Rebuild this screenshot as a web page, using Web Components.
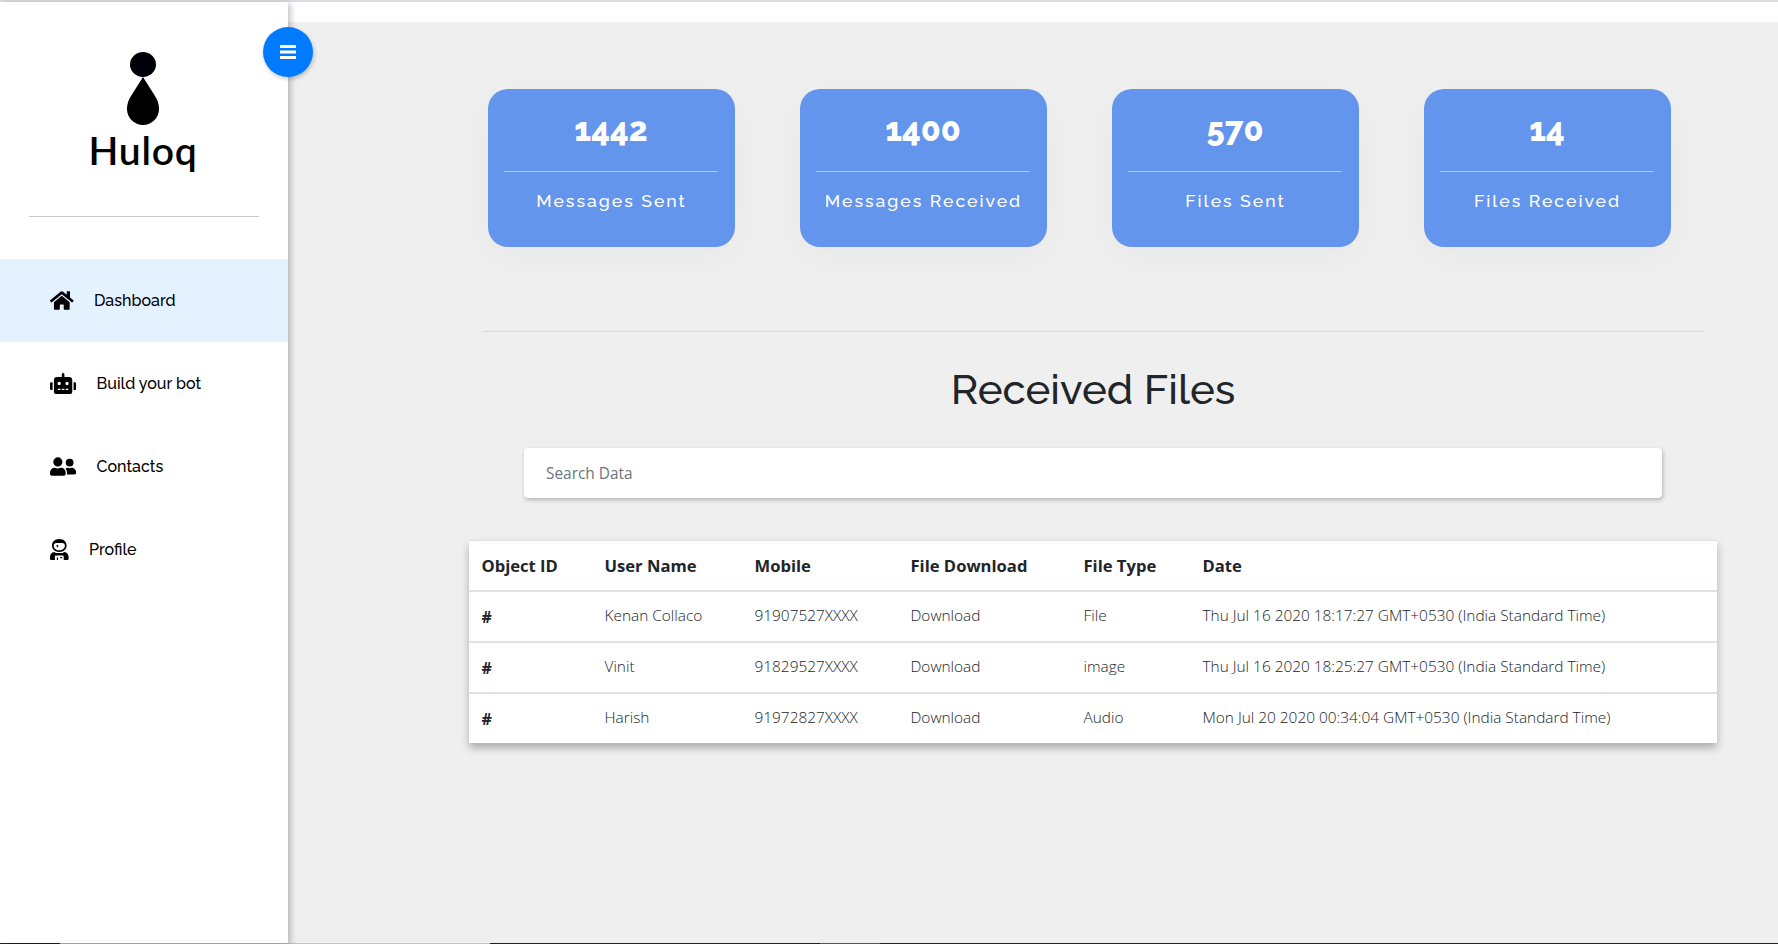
<!DOCTYPE html>
<html lang="en"><head><meta charset="utf-8"><title>Huloq Dashboard</title>
<style>
html,body{margin:0;height:100%;overflow:hidden}
body{font-family:"Open Sans",sans-serif;color:#212529}
</style></head><body>
<huloq-app></huloq-app>
<script>
const define=(name,html,setup)=>{
  const t=document.createElement('template');t.innerHTML=html;
  customElements.define(name,class extends HTMLElement{
    constructor(){super();this.attachShadow({mode:'open'}).append(t.content.cloneNode(true));}
    connectedCallback(){if(setup)setup(this,this.shadowRoot);}
  });
};
const icons={
home:['0 0 576 512',23.600,'<path d="M280.4 148.3 96 300.1V464a16 16 0 0 0 16 16l112-.3a16 16 0 0 0 16-16V368a16 16 0 0 1 16-16h64a16 16 0 0 1 16 16v95.600a16 16 0 0 0 16 16.100L464 480a16 16 0 0 0 16-16V300L295.700 148.300a12.200 12.200 0 0 0-15.300 0zM571.600 251.500 488 182.600V44a12 12 0 0 0-12-12h-56a12 12 0 0 0-12 12v72.600L318.500 43a48 48 0 0 0-61 0L4.300 251.500a12 12 0 0 0-1.600 16.900l25.500 31a12 12 0 0 0 16.900 1.600l235.200-193.700a12.200 12.200 0 0 1 15.300 0L530.900 301a12 12 0 0 0 16.900-1.600l25.500-31a12 12 0 0 0-1.700-16.900z"/>'],
robot:['0 0 640 512',26.200,'<path fill-rule="evenodd" d="M32 224h32v192H32a32 32 0 0 1-32-32V256a32 32 0 0 1 32-32zm512-48v272a64 64 0 0 1-64 64H160a64 64 0 0 1-64-64V176a80 80 0 0 1 80-80h112V32a32 32 0 0 1 64 0v64h112a80 80 0 0 1 80 80zM264 256a40 40 0 1 0-80 0 40 40 0 0 0 80 0zm-8 128h-64v32h64zm96 0h-64v32h64zm104-128a40 40 0 1 0-80 0 40 40 0 0 0 80 0zm-8 128h-64v32h64zm192-128v128a32 32 0 0 1-32 32h-32V224h32a32 32 0 0 1 32 32z"/>'],
users:['0 0 640 512',26.200,'<path d="M192 256a112 112 0 1 0 0-224 112 112 0 0 0 0 224zm76.800 32h-8.300a157 157 0 0 1-137 0h-8.300A115 115 0 0 0 0 403.200V432a48 48 0 0 0 48 48h288a48 48 0 0 0 48-48v-28.800A115 115 0 0 0 268.800 288zM480 256a96 96 0 1 0 0-192 96 96 0 0 0 0 192zm48 32h-3.800a130 130 0 0 1-88.400 0H432c-20 0-39 6-55.400 15.400 24.400 26.300 39.400 61.200 39.400 99.800v38.400c0 2.200-.5 4.300-.6 6.400H592a48 48 0 0 0 48-48 112 112 0 0 0-112-112z"/>'],
astro:['0 0 19 21',18.600,'<path fill-rule="evenodd" d="M9.500 0C4.900 0 2 2.900 2 6.500S5 13 9.500 13 17 10.100 17 6.500 14.100 0 9.500 0zM6.500 4h6c1.600 0 2.700 1 2.700 2.700 0 2.600-2.400 4.500-5.700 4.500S3.800 9.300 3.800 6.700C3.800 5 4.900 4 6.500 4zM7.500 5.500 7 6.600l-1.100.5 1.100.5.500 1.100L8 7.600l1.100-.5L8 6.600zM4.500 13l1.500 1h7l1.500-1c3 .4 4.500 2.400 4.500 5v1.500c0 1-.5 1.500-1.500 1.500H14v-3.200c0-.8-.5-1.300-1.300-1.300H6.300c-.8 0-1.300.5-1.300 1.300V21H1.500C.5 21 0 20.500 0 19.500V18c0-2.600 1.500-4.600 4.500-5z"/><path d="M7 18.500h1.200V21H7zM10.500 18h2v1.200h-2z"/>']
};
define('app-logo',`<style>:host{display:flex;flex-direction:column;align-items:center;height:161px;padding-top:50px;padding-right:2px}
svg{display:block}b{display:block;font:600 39px/46px Lato,sans-serif;color:#000;margin-top:0;letter-spacing:.8px}</style>
<svg width="34" height="75" viewBox="0 0 34 75"><ellipse cx="17" cy="12.500" rx="13" ry="12.500" fill="#000008"/><path d="M17 25 29 44q4 6 4 13a16 16 0 0 1-32 0q0-7 4-13z"/></svg><b>Huloq</b>`);
define('nav-item',`<style>:host{display:flex;align-items:center;height:83px;padding-left:50px;box-sizing:border-box;color:#000;font:500 16px/24px Raleway,Lato,sans-serif}
:host([active]){background:#e4f2ff}.i{display:flex;margin-right:20.400px}</style><span class="i"></span><span><slot></slot></span>`,
(h,r)=>{const [v,w,p]=icons[h.getAttribute('icon')];r.querySelector('.i').innerHTML=`<svg width="${w}" height="21" viewBox="${v}" preserveAspectRatio="none">${p}</svg>`});
define('side-bar',`<style>:host{display:block;width:288px;background:#fff;box-shadow:2px 2px 7px rgba(0,0,0,.28);position:relative;z-index:2}
hr{border:0;height:1px;background:#c9c9c9;width:230px;margin:3px auto 42px 29px}
button{position:absolute;left:263px;top:25px;width:50px;height:50px;border:0;border-radius:50%;background:#007bff;box-shadow:1px 2px 4px rgba(0,0,0,.22);padding:0;display:grid;place-items:center}</style>
<app-logo></app-logo><hr>
<nav><nav-item icon="home" active>Dashboard</nav-item><nav-item icon="robot">Build your bot</nav-item><nav-item icon="users">Contacts</nav-item><nav-item icon="astro">Profile</nav-item></nav>
<button aria-label="Menu"><svg width="16" height="14" viewBox="0 0 16 14" fill="#fff"><path d="M0 0h16v3H0zM0 5.500h16v3H0zM0 11h16v3H0z"/></svg></button>`);
define('stat-card',`<style>:host{display:block;box-sizing:border-box;width:247px;height:158px;padding:25px 17px 0 16px;border-radius:20px;background:#6495ed;color:#fff;text-align:center;box-shadow:0 10px 40px rgba(0,0,0,.035)}
.n{font:800 32.500px/32px Raleway,sans-serif;height:57px;padding-left:1px}.l{border-top:1px solid rgba(255,255,255,.5);font:500 17.600px/24px Raleway,Lato,sans-serif;letter-spacing:2px;padding:17px 0 0 2px;white-space:nowrap}</style>
<div class="n"><slot name="n"></slot></div><div class="l"><slot></slot></div>`);
define('search-box',`<style>:host{display:flex;align-items:center;box-sizing:border-box;height:50px;width:1138px;padding-left:22px;border-radius:4px;background:#fff;color:#6c757d;font-size:15.400px;box-shadow:1px 2px 4px rgba(0,0,0,.25)}</style><slot></slot>`);
define('files-table',`<style>:host{display:block;width:1248px;background:#fff;box-shadow:0 5px 8px rgba(0,0,0,.28)}
.r{display:grid;grid-template-columns:123px 150px 156px 173px 119px 1fr;padding-left:12.500px;height:51px;box-sizing:border-box;border-top:2px solid #dee2e6;font:300 15.400px/48px "Open Sans",sans-serif}
.r.head{border-top:1px solid #dee2e6;height:50px;font:700 16.600px/49px "Open Sans",sans-serif}
.r:not(.head) span:first-child{font-weight:700;line-height:51px;font-size:16px}</style>`,
(h,r)=>{[['Object ID','User Name','Mobile','File Download','File Type','Date'],['#','Kenan Collaco','91907527XXXX','Download','File','Thu Jul 16 2020 18:17:27 GMT+0530 (India Standard Time)'],['#','Vinit','91829527XXXX','Download','image','Thu Jul 16 2020 18:25:27 GMT+0530 (India Standard Time)'],['#','Harish','91972827XXXX','Download','Audio','Mon Jul 20 2020 00:34:04 GMT+0530 (India Standard Time)']].forEach((row,i)=>{
const d=document.createElement('div');d.className=i?'r':'r head';for(const c of row){const s=document.createElement('span');s.textContent=c;d.append(s)}
r.append(d)})});
define('huloq-app',`<style>:host{display:flex;flex-direction:column;height:944px;background:#efefef}
.top{height:2px;background:#dcdce2}.body{display:flex;flex:1}
main{flex:1;border-top:20px solid #fff;display:flex;flex-direction:column;align-items:center;padding-left:120px;}
.cards{display:flex;gap:65px;margin:67px 28px 0 0}
hr{border:0;height:1px;width:1221px;background:#d8d8d8;margin:84px 0 0}
h1{margin:34px 0 0;font:500 42px/48px Raleway,Lato,sans-serif}
search-box{margin-top:34px}files-table{margin-top:42px}
.foot{height:1px;background:linear-gradient(90deg,#222 60px,#c4c4c4 60px 490px,#222 490px 820px,#555 820px 880px,#222 880px)}</style>
<div class="top"></div><div class="body"><side-bar></side-bar><main><div class="cards">
<stat-card><span slot="n">1442</span>Messages Sent</stat-card><stat-card><span slot="n">1400</span>Messages Received</stat-card><stat-card><span slot="n">570</span>Files Sent</stat-card><stat-card><span slot="n">14</span>Files Received</stat-card></div>
<hr><h1>Received Files</h1><search-box>Search Data</search-box><files-table></files-table></main></div><div class="foot"></div>`);
</script></body></html>
